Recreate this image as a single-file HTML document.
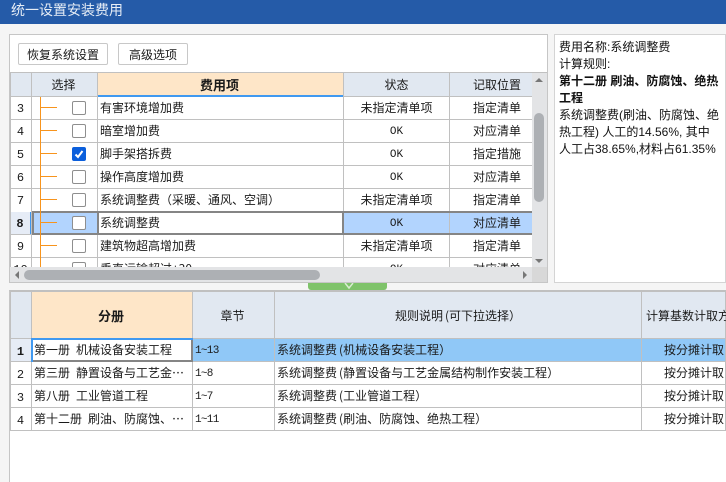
<!DOCTYPE html>
<html lang="zh">
<head>
<meta charset="utf-8">
<style>
html,body{margin:0;padding:0;width:726px;height:482px;overflow:hidden;background:#f5f5f5}
body{position:relative;font-family:"WenQuanYi Zen Hei Sharp","WenQuanYi Zen Hei","Noto Sans CJK SC",sans-serif;font-size:12px;color:#1a1a1a}
.a{position:absolute;box-sizing:border-box}
.t{position:absolute;white-space:nowrap;line-height:23px;height:23px;font-size:12px}
.c{text-align:center}
.m{font-family:"Liberation Mono",monospace;font-size:11px}
.n{font-family:"Liberation Mono",monospace;font-size:12px;text-align:center}
.r{font-family:"Liberation Mono",monospace;font-size:11px;letter-spacing:-.7px}
.h{background:#c0c0c0}
.cb{position:absolute;left:72px;width:14px;height:14px;box-sizing:border-box;border:1px solid #8e8e8e;border-radius:2px;background:#fff}
.o1{position:absolute;left:40px;width:1px;background:#f7941d}
.o2{position:absolute;left:40px;width:17px;height:1px;background:#f7941d}
.sp{display:inline-block;width:6px}
.p{padding-left:2px}
</style>
</head>
<body>
<div class="a" style="left:0;top:0;width:726px;height:24px;background:#255ba8"></div>
<div class="t" style="left:11px;top:-1px;color:#e6edf6;font-size:14px">统一设置安装费用</div>

<!-- top panel -->
<div class="a" style="left:9px;top:34px;width:539px;height:249px;background:#fff;border:1px solid #c6c6c6"></div>
<div class="a" style="left:18px;top:43px;width:90px;height:22px;border:1px solid #c8c8c8;border-radius:2px;background:#fff"></div>
<div class="t c" style="left:18px;top:43px;width:90px">恢复系统设置</div>
<div class="a" style="left:118px;top:43px;width:70px;height:22px;border:1px solid #c8c8c8;border-radius:2px;background:#fff"></div>
<div class="t c" style="left:118px;top:43px;width:70px">高级选项</div>

<div class="a" style="left:10px;top:72px;width:537px;height:1px;background:#c0c0c0"></div>
<div class="a" style="left:11px;top:73px;width:86px;height:23px;background:#e1e8f1"></div>
<div class="a" style="left:98px;top:73px;width:245px;height:23px;background:#fee6c8"></div>
<div class="a" style="left:344px;top:73px;width:188px;height:23px;background:#e1e8f1"></div>
<div class="t c" style="left:31px;top:73px;width:65px">选择</div>
<div class="t c" style="left:97px;top:73px;width:245px;font-weight:bold;font-size:13px">费用项</div>
<div class="t c" style="left:344px;top:73px;width:105px">状态</div>
<div class="t c" style="left:450px;top:73px;width:94px">记取位置</div>

<!-- selected row 8 -->
<div class="a" style="left:32px;top:212px;width:500px;height:22px;background:#b2d4fe"></div>
<div class="a" style="left:11px;top:212px;width:20px;height:22px;background:#e6ecf6"></div>
<div class="a" style="left:30px;top:212px;width:2px;height:23px;background:#3f97ef"></div>

<!-- horizontal grid lines -->
<div class="a h" style="left:10px;top:96px;width:522px;height:1px"></div>
<div class="a h" style="left:10px;top:119px;width:522px;height:1px"></div>
<div class="a h" style="left:10px;top:142px;width:522px;height:1px"></div>
<div class="a h" style="left:10px;top:165px;width:522px;height:1px"></div>
<div class="a h" style="left:10px;top:188px;width:522px;height:1px"></div>
<div class="a h" style="left:10px;top:234px;width:522px;height:1px"></div>
<div class="a h" style="left:10px;top:257px;width:522px;height:1px"></div>
<div class="a" style="left:98px;top:95px;width:245px;height:2px;background:#4099f0"></div>
<!-- vertical grid lines -->
<div class="a h" style="left:10px;top:73px;width:1px;height:194px"></div>
<div class="a h" style="left:31px;top:73px;width:1px;height:194px"></div>
<div class="a h" style="left:97px;top:73px;width:1px;height:194px"></div>
<div class="a h" style="left:343px;top:73px;width:1px;height:194px"></div>
<div class="a h" style="left:449px;top:73px;width:1px;height:194px"></div>

<!-- row 8 outline -->
<div class="a" style="left:32px;top:211px;width:500px;height:2px;background:#858585"></div>
<div class="a" style="left:32px;top:233px;width:500px;height:2px;background:#858585"></div>
<div class="a" style="left:32px;top:211px;width:2px;height:24px;background:#858585"></div>
<div class="a" style="left:97px;top:213px;width:247px;height:20px;background:#fff;border-left:2px solid #858585;border-right:2px solid #858585"></div>

<!-- orange tree -->
<div class="o1" style="top:97px;height:170px"></div>
<div class="o2" style="top:107px"></div>
<div class="o2" style="top:130px"></div>
<div class="o2" style="top:153px"></div>
<div class="o2" style="top:176px"></div>
<div class="o2" style="top:199px"></div>
<div class="o2" style="top:222px"></div>
<div class="o2" style="top:245px"></div>

<!-- checkboxes -->
<div class="cb" style="top:101px"></div>
<div class="cb" style="top:124px"></div>
<div class="cb" style="top:147px;background:#0b5fdc;border-color:#0b5fdc">
  <svg width="12" height="12" style="position:absolute;left:0;top:0"><path d="M2.5 6.5 L5 9 L9.5 3" fill="none" stroke="#fff" stroke-width="2"/></svg>
</div>
<div class="cb" style="top:170px"></div>
<div class="cb" style="top:193px"></div>
<div class="cb" style="top:216px"></div>
<div class="cb" style="top:239px"></div>

<!-- row numbers -->
<div class="t n" style="left:10px;top:98px;width:21px">3</div>
<div class="t n" style="left:10px;top:121px;width:21px">4</div>
<div class="t n" style="left:10px;top:144px;width:21px">5</div>
<div class="t n" style="left:10px;top:167px;width:21px">6</div>
<div class="t n" style="left:10px;top:190px;width:21px">7</div>
<div class="t n" style="left:10px;top:213px;width:20px;font-weight:bold">8</div>
<div class="t n" style="left:10px;top:236px;width:21px">9</div>

<!-- names -->
<div class="t" style="left:100px;top:96px">有害环境增加费</div>
<div class="t" style="left:100px;top:119px">暗室增加费</div>
<div class="t" style="left:100px;top:142px">脚手架搭拆费</div>
<div class="t" style="left:100px;top:165px">操作高度增加费</div>
<div class="t" style="left:100px;top:188px">系统调整费（采暖、通风、空调）</div>
<div class="t" style="left:100px;top:211px">系统调整费</div>
<div class="t" style="left:100px;top:234px">建筑物超高增加费</div>

<!-- status -->
<div class="t c" style="left:344px;top:96px;width:105px">未指定清单项</div>
<div class="t c m" style="left:344px;top:121px;width:105px">OK</div>
<div class="t c m" style="left:344px;top:144px;width:105px">OK</div>
<div class="t c m" style="left:344px;top:167px;width:105px">OK</div>
<div class="t c" style="left:344px;top:188px;width:105px">未指定清单项</div>
<div class="t c m" style="left:344px;top:213px;width:105px">OK</div>
<div class="t c" style="left:344px;top:234px;width:105px">未指定清单项</div>

<!-- position -->
<div class="t c" style="left:450px;top:96px;width:94px">指定清单</div>
<div class="t c" style="left:450px;top:119px;width:94px">对应清单</div>
<div class="t c" style="left:450px;top:142px;width:94px">指定措施</div>
<div class="t c" style="left:450px;top:165px;width:94px">对应清单</div>
<div class="t c" style="left:450px;top:188px;width:94px">指定清单</div>
<div class="t c" style="left:450px;top:211px;width:94px">对应清单</div>
<div class="t c" style="left:450px;top:234px;width:94px">指定清单</div>

<!-- cut row 10 -->
<div class="a" style="left:10px;top:258px;width:522px;height:9px;overflow:hidden">
  <div class="t n" style="left:0;top:1px;width:21px">10</div>
  <div class="cb" style="left:62px;top:4px"></div>
  <div class="t" style="left:90px;top:-1px">垂直运输超过+30</div>
  <div class="t c m" style="left:334px;top:1px;width:105px">OK</div>
  <div class="t c" style="left:440px;top:-1px;width:94px">对应清单</div>
</div>
<div class="o1" style="top:258px;height:9px"></div>

<!-- v scroll -->
<div class="a" style="left:532px;top:73px;width:15px;height:194px;background:#e3e4e6"></div>
<div class="a" style="left:534px;top:113px;width:10px;height:89px;background:#adb0b4;border-radius:5px"></div>
<div class="a" style="left:535px;top:78px;width:0;height:0;border-left:4px solid transparent;border-right:4px solid transparent;border-bottom:4px solid #777"></div>
<div class="a" style="left:535px;top:259px;width:0;height:0;border-left:4px solid transparent;border-right:4px solid transparent;border-top:4px solid #777"></div>
<!-- h scroll -->
<div class="a" style="left:10px;top:267px;width:522px;height:15px;background:#e3e4e6"></div>
<div class="a" style="left:532px;top:267px;width:15px;height:15px;background:#d8d8d8"></div>
<div class="a" style="left:24px;top:270px;width:296px;height:10px;background:#adb0b4;border-radius:5px"></div>
<div class="a" style="left:15px;top:271px;width:0;height:0;border-top:4px solid transparent;border-bottom:4px solid transparent;border-right:4px solid #777"></div>
<div class="a" style="left:523px;top:271px;width:0;height:0;border-top:4px solid transparent;border-bottom:4px solid transparent;border-left:4px solid #777"></div>

<!-- right panel -->
<div class="a" style="left:554px;top:34px;width:172px;height:249px;background:#fff;border:1px solid #d4d4d4"></div>
<div class="a" style="left:559px;top:39px;width:165px;white-space:nowrap;font-family:'Liberation Sans','Noto Sans CJK SC',sans-serif;font-size:12px;line-height:17px;color:#111">
费用名称:系统调整费<br>计算规则:<br><b>第十二册 刷油、防腐蚀、绝热<br>工程</b><br>系统调整费(刷油、防腐蚀、绝<br>热工程) 人工的14.56%, 其中<br>人工占38.65%,材料占61.35%
</div>

<!-- green splitter -->
<div class="a" style="left:308px;top:283px;width:79px;height:7px;background:#7fc36a;border-radius:0 0 3px 3px"></div>
<svg class="a" style="left:343px;top:283px" width="12" height="7"><path d="M2 0 L6 5 L10 0" fill="none" stroke="#d8edd0" stroke-width="1.5"/></svg>

<!-- bottom panel -->
<div class="a" style="left:9px;top:290px;width:717px;height:192px;background:#fff;border-top:2px solid #c0c0c0;border-left:1px solid #c6c6c6"></div>
<div class="a" style="left:11px;top:292px;width:715px;height:46px;background:#e1e8f1"></div>
<div class="a" style="left:32px;top:292px;width:160px;height:46px;background:#fee6c8"></div>
<div class="a" style="left:193px;top:339px;width:533px;height:22px;background:#90c8f7"></div>
<div class="a" style="left:11px;top:339px;width:20px;height:22px;background:#e6ecf6"></div>

<div class="a h" style="left:10px;top:338px;width:716px;height:1px"></div>
<div class="a h" style="left:10px;top:361px;width:716px;height:1px"></div>
<div class="a h" style="left:10px;top:384px;width:716px;height:1px"></div>
<div class="a h" style="left:10px;top:407px;width:716px;height:1px"></div>
<div class="a h" style="left:10px;top:430px;width:716px;height:1px"></div>
<div class="a h" style="left:10px;top:292px;width:1px;height:139px"></div>
<div class="a h" style="left:31px;top:292px;width:1px;height:139px"></div>
<div class="a h" style="left:192px;top:292px;width:1px;height:139px"></div>
<div class="a h" style="left:274px;top:292px;width:1px;height:139px"></div>
<div class="a h" style="left:641px;top:292px;width:1px;height:139px"></div>
<div class="a h" style="left:725px;top:292px;width:1px;height:139px"></div>

<!-- active cell -->
<div class="a" style="left:31px;top:338px;width:162px;height:2px;background:#4099f0"></div>
<div class="a" style="left:31px;top:338px;width:2px;height:24px;background:#4099f0"></div>
<div class="a" style="left:191px;top:340px;width:2px;height:21px;background:#858585"></div>
<div class="a" style="left:33px;top:360px;width:160px;height:2px;background:#858585"></div>

<div class="t c" style="left:31px;top:304px;width:160px;font-weight:bold;font-size:13px">分册</div>
<div class="t c" style="left:192px;top:304px;width:81px">章节</div>
<div class="t c" style="left:275px;top:304px;width:366px">规则说明<span class="p">(</span>可下拉选择）</div>
<div class="t" style="left:646px;top:304px">计算基数计取方</div>

<div class="t n" style="left:10px;top:341px;width:21px;font-weight:bold">1</div>
<div class="t n" style="left:10px;top:364px;width:21px">2</div>
<div class="t n" style="left:10px;top:387px;width:21px">3</div>
<div class="t n" style="left:10px;top:410px;width:21px">4</div>

<div class="t" style="left:34px;top:338px">第一册<span class="sp"></span>机械设备安装工程</div>
<div class="t" style="left:34px;top:361px">第三册<span class="sp"></span>静置设备与工艺金…</div>
<div class="t" style="left:34px;top:384px">第八册<span class="sp"></span>工业管道工程</div>
<div class="t" style="left:34px;top:407px">第十二册<span class="sp"></span>刷油、防腐蚀、…</div>

<div class="t r" style="left:195px;top:340px">1~13</div>
<div class="t r" style="left:195px;top:363px">1~8</div>
<div class="t r" style="left:195px;top:386px">1~7</div>
<div class="t r" style="left:195px;top:409px">1~11</div>

<div class="t" style="left:277px;top:338px">系统调整费<span class="p">(</span>机械设备安装工程）</div>
<div class="t" style="left:277px;top:361px">系统调整费<span class="p">(</span>静置设备与工艺金属结构制作安装工程）</div>
<div class="t" style="left:277px;top:384px">系统调整费<span class="p">(</span>工业管道工程）</div>
<div class="t" style="left:277px;top:407px">系统调整费<span class="p">(</span>刷油、防腐蚀、绝热工程）</div>

<div class="t" style="left:664px;top:338px">按分摊计取</div>
<div class="t" style="left:664px;top:361px">按分摊计取</div>
<div class="t" style="left:664px;top:384px">按分摊计取</div>
<div class="t" style="left:664px;top:407px">按分摊计取</div>
</body>
</html>
